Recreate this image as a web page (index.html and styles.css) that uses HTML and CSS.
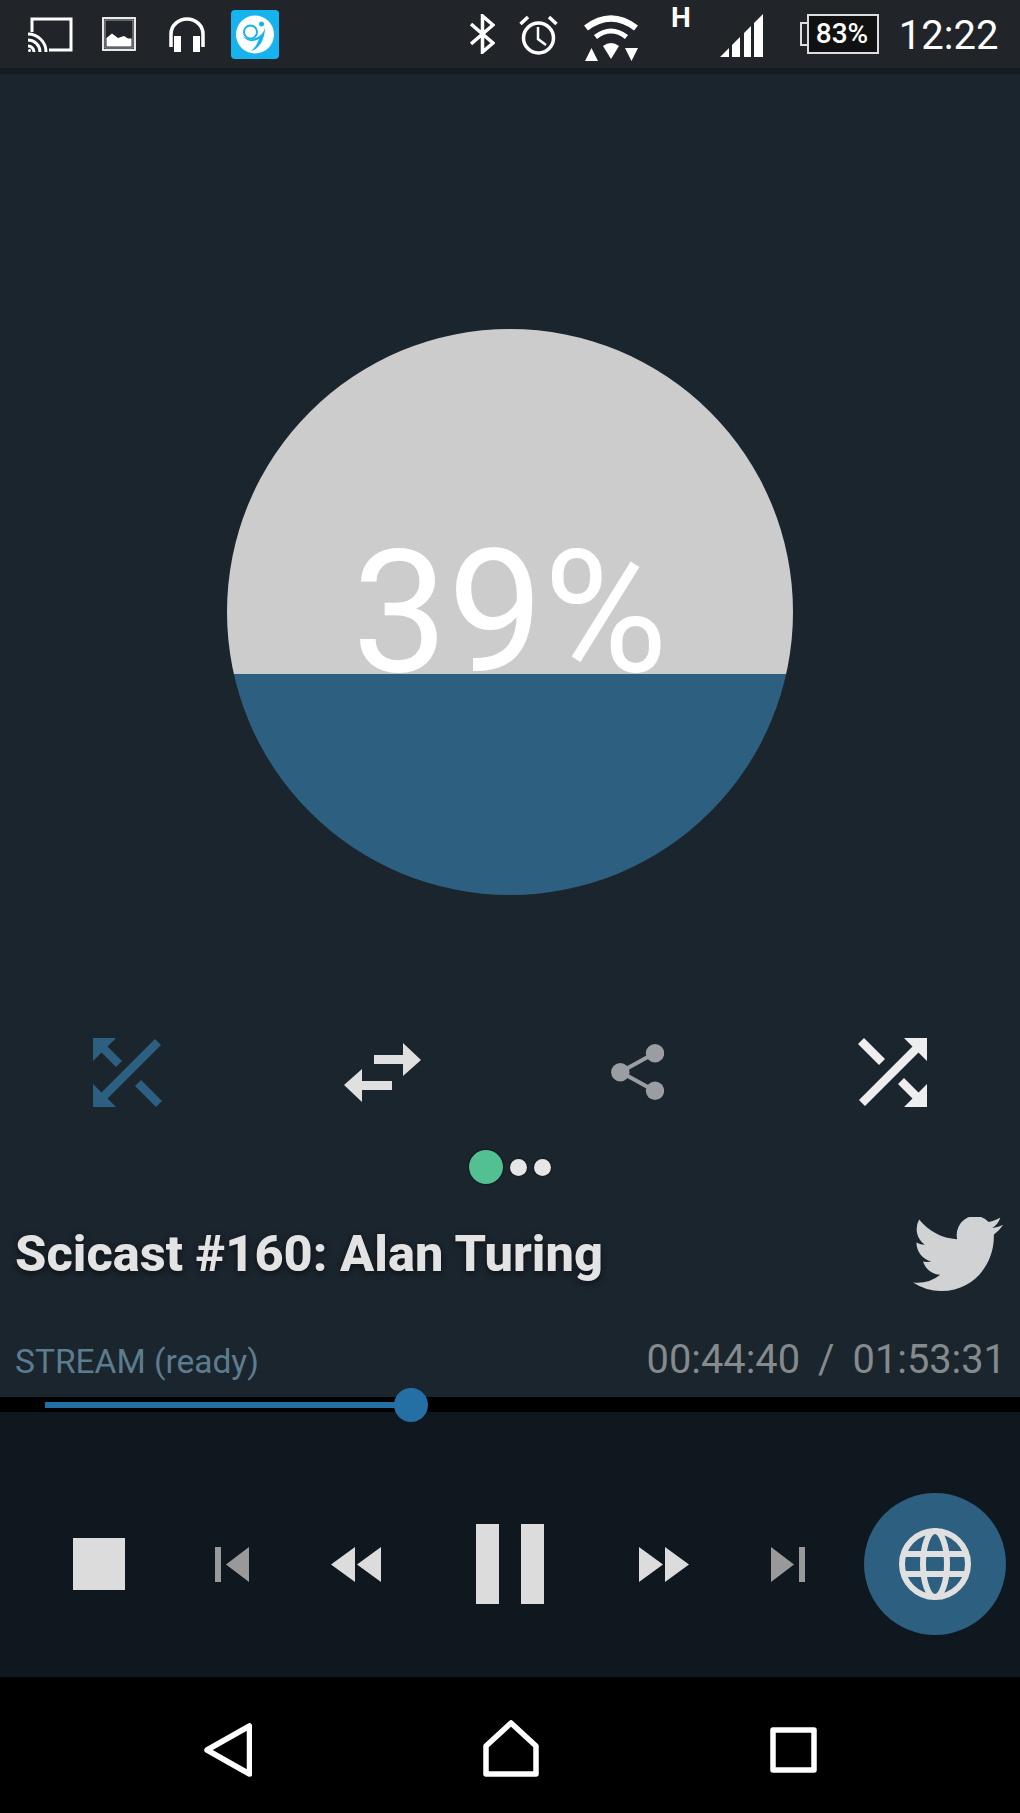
FILE: index.html
```html
<!DOCTYPE html>
<html lang="en">
<head>
  <meta charset="UTF-8" />
  <title>Scicast player</title>
  <link rel="stylesheet" href="styles.css">
</head>
<body>
  <svg class="defs" width="0" height="0">
    <symbol id="shuffle" viewBox="0 0 69 69">
      <path d="M46 0H69V23L60.500 14.500 7 68 1 62 54.500 8.500Z" />
      <path d="M0 6 6 0 27 21 21 27Z" />
      <path d="M40 46 46 40 60.500 54.500 69 46V69H46L54.500 60.500Z" />
    </symbol>
  </svg>

  <header class="status">
    <svg class="si-cast" width="45" height="35" viewBox="0 0 45 35">
      <path class="line" d="M4 15V2H43V33H21" stroke-width="3" />
      <path class="line" d="M0 17A18 18 0 0 1 18 35M0 23A12 12 0 0 1 12 35M0 29A6 6 0 0 1 6 35" stroke-width="3" />
      <circle class="solid" cx="1.500" cy="33.500" r="1.500" />
    </svg>
    <svg class="si-img" width="34" height="34" viewBox="0 0 34 34">
      <rect class="line" x="1" y="1" width="32" height="32" stroke-width="1.800" />
      <rect class="line" x="3" y="3" width="28" height="28" stroke-width=".6" />
      <path class="solid" d="M4.500 29.500V21L10 16.500 16 21 22 19 26 21.500 29.500 21.500V29.500Z" />
    </svg>
    <svg class="si-phones" width="36" height="35" viewBox="0 0 36 35">
      <path class="line" d="M2 30V17A16 15 0 0 1 34 17V30" stroke-width="3.500" />
      <rect class="solid" x="5" y="19" width="7" height="16" />
      <rect class="solid" x="24" y="19" width="7" height="16" />
    </svg>
    <svg class="si-app" width="48" height="49" viewBox="0 0 48 49">
      <rect x="0" y="0" width="48" height="49" rx="4" fill="#17b3ee" />
      <circle cx="24" cy="24.500" r="19" fill="#fff" />
      <circle cx="19.500" cy="22" r="6.500" fill="#fff" stroke="#17b3ee" stroke-width="2" />
      <circle cx="30.500" cy="14" r="2.500" fill="#17b3ee" />
      <path d="M11 24C14 31 21 33 28 29 26 34 24 38 20 41 28 39 34 30 34 17 33 24 28 27 22 29 17 30 13 28 11 24Z" fill="#17b3ee" />
    </svg>
    <svg class="si-bt" width="25" height="40" viewBox="0 0 25 40">
      <path class="line" d="M1 10 23 29 12.500 38V2L23 11 1 30" stroke-width="3.500" />
    </svg>
    <svg class="si-alarm" width="39" height="41" viewBox="0 0 39 41">
      <circle class="line" cx="19.500" cy="24" r="15" stroke-width="3.500" />
      <path class="line" d="M19 13V25L27 31" stroke-width="2.500" />
      <path class="line" d="M1.500 10 9 3M37.500 10 30 3" stroke-width="3.500" />
    </svg>
    <svg class="si-wifi" width="56" height="46" viewBox="0 0 56 46">
      <path class="line" d="M3 13Q28 -6 53 13" stroke-width="6.500" />
      <path class="line" d="M12.500 22Q28 10 43.500 22" stroke-width="5" />
      <path class="solid" d="M20 31Q28 25 36 31L28 44Z" />
      <path class="solid" d="M2 46H15L8.500 33ZM42 33H55L48.500 46Z" />
    </svg>
    <span class="si-h">H</span>
    <svg class="si-signal" width="43" height="43" viewBox="0 0 43 43">
      <path class="solid" d="M0 43 9 34V43ZM12 31 20 23V43H12ZM24 19 31 12V43H24ZM34 9 43 0V43H34Z" />
    </svg>
    <div class="battery">
      <span class="battery-nub"></span>
      <span class="battery-body">83%</span>
    </div>
    <span class="clock">12:22</span>
  </header>

  <main>
    <div class="gauge">
      <span class="gauge-text">39%</span>
    </div>

    <div class="actions">
      <svg class="icon-blue flip" width="69" height="69"><use href="#shuffle" /></svg>
      <svg class="icon-light" width="77" height="59" viewBox="0 0 77 59">
        <path d="M30 12H59V0L77 17 59 33V21H30ZM48 38H18V26L0 42 18 59V47H48Z" />
      </svg>
      <svg class="icon-share" width="53" height="56" viewBox="0 0 53 56">
        <path d="M44 9 9.500 28 44 47" fill="none" stroke="#9a9ea3" stroke-width="4" />
        <circle cx="44" cy="9.300" r="9.200" />
        <circle cx="9.300" cy="28.300" r="9.200" />
        <circle cx="44" cy="46.800" r="9.200" />
      </svg>
      <svg class="icon-bright" width="69" height="69"><use href="#shuffle" /></svg>
    </div>

    <div class="pager">
      <span class="dot dot-on"></span>
      <span class="dot"></span>
      <span class="dot"></span>
    </div>

    <div class="title-row">
      <h1>Scicast #160: Alan Turing</h1>
      <svg class="twitter" width="90" height="75" viewBox="0 2.500 24 19.500" preserveAspectRatio="none">
        <path d="M23.953 4.570a10 10 0 0 1-2.825.775 4.958 4.958 0 0 0 2.163-2.723c-.951.555-2.005.959-3.127 1.184a4.920 4.920 0 0 0-8.384 4.482C7.690 8.095 4.067 6.130 1.640 3.162a4.822 4.822 0 0 0-.666 2.475c0 1.710.870 3.213 2.188 4.096a4.904 4.904 0 0 1-2.228-.616v.060a4.923 4.923 0 0 0 3.946 4.827 4.996 4.996 0 0 1-2.212.085 4.936 4.936 0 0 0 4.604 3.417 9.867 9.867 0 0 1-6.102 2.105c-.390 0-.779-.023-1.170-.067a13.995 13.995 0 0 0 7.557 2.209c9.053 0 13.998-7.496 13.998-13.985 0-.210 0-.420-.015-.630A9.935 9.935 0 0 0 24 4.590z" />
      </svg>
    </div>

    <div class="meta-row">
      <span class="stream">STREAM (ready)</span>
      <span class="times">00:44:40<span class="sep">/</span>01:53:31</span>
    </div>

    <div class="slider">
      <div class="slider-fill" style="width: 366px">
        <span class="slider-thumb"></span>
      </div>
    </div>

    <div class="controls">
      <svg class="c-stop" width="52" height="52"><rect width="52" height="52" /></svg>
      <svg class="c-prev dim" width="34" height="35" viewBox="0 0 34 35"><path d="M0 0H6V35H0ZM34 0V35L11 17.500Z" /></svg>
      <svg class="c-rew" width="50" height="35" viewBox="0 0 50 35"><path d="M24 0V35L0 17.500ZM50 0V35L26 17.500Z" /></svg>
      <svg class="c-pause" width="68" height="80" viewBox="0 0 68 80"><path d="M0 0H23V80H0ZM45 0H68V80H45Z" /></svg>
      <svg class="c-ff" width="50" height="35" viewBox="0 0 50 35"><path d="M0 0V35L24 17.500ZM26 0V35L50 17.500Z" /></svg>
      <svg class="c-next dim" width="34" height="35" viewBox="0 0 34 35"><path d="M0 0V35L23 17.500ZM28 0H34V35H28Z" /></svg>
      <div class="fab">
        <svg width="72" height="72" viewBox="0 0 72 72" fill="none" stroke="#e0e0e0" stroke-width="6">
          <circle cx="36" cy="36" r="33" />
          <ellipse cx="36" cy="36" rx="12" ry="33" />
          <path d="M4 26H68M4 46H68" />
        </svg>
      </div>
    </div>
  </main>

  <nav class="navbar">
    <svg width="48" height="54" viewBox="0 0 48 54"><path d="M3 27 45.500 3V51Z" /></svg>
    <svg class="nav-home" width="56" height="57" viewBox="0 0 56 57"><path d="M28 3 53 26V54H3V26Z" /></svg>
    <svg width="47" height="46" viewBox="0 0 47 46"><rect x="3" y="3" width="41" height="40" /></svg>
  </nav>
</body>
</html>
```

FILE: styles.css
```css
:root {
  --bg: #1b252e;
  --panel: #0f181f;
  --blue: #2d5f80;
  --light: #e0e0e0;
}

html, body {
  margin: 0;
  padding: 0;
}

body {
  width: 1020px;
  height: 1813px;
  overflow: hidden;
  background-color: var(--bg);
  font-family: Roboto, sans-serif;
}

svg {
  display: block;
  flex: none;
}

.defs {
  position: absolute;
}

.line {
  fill: none;
  stroke: #fff;
}

.solid {
  fill: #fff;
}

/* status bar */
.status {
  display: flex;
  align-items: center;
  box-sizing: border-box;
  height: 74px;
  padding-left: 28px;
  background-color: #212429;
  border-bottom: 6px solid #141d24;
  color: #fff;
}

.si-img { margin-left: 29px; }
.si-phones { margin-left: 33px; }
.si-app { margin-left: 26px; }
.si-bt { margin-left: 191px; }
.si-alarm { margin-left: 24px; }
.si-wifi { margin-left: 25px; margin-top: 8px; }

.si-h {
  margin: 0 0 32px 32px;
  font-size: 28px;
  font-weight: 700;
  line-height: 1;
}

.si-signal { margin-left: 29px; margin-top: 3px; }

.battery {
  display: flex;
  align-items: center;
  margin-left: 37px;
}

.battery-nub {
  width: 5px;
  height: 20px;
  border: 2px solid #ddd;
  border-right: none;
}

.battery-body {
  box-sizing: border-box;
  width: 72px;
  height: 40px;
  padding-left: 7px;
  border: 2px solid #ddd;
  background-color: #111;
  font-size: 28px;
  font-weight: 500;
  line-height: 36px;
}

.clock {
  margin: 3px 0 0 20px;
  font-size: 40px;
  line-height: 1;
}

/* level gauge */
.gauge {
  box-sizing: border-box;
  display: flex;
  justify-content: center;
  width: 566px;
  height: 566px;
  margin: 255px auto 0;
  padding-top: 199px;
  border-radius: 50%;
  background: linear-gradient(to top, var(--blue) 39%, #ccc 39%);
}

.gauge-text {
  color: #fff;
  font-size: 170px;
  font-weight: 400;
  line-height: 1;
}

/* action icons */
.actions {
  display: grid;
  grid-template-columns: repeat(4, 1fr);
  justify-items: center;
  align-items: center;
  height: 70px;
  margin-top: 142px;
}

.icon-blue { fill: var(--blue); }
.icon-light { fill: var(--light); }
.icon-bright { fill: #eeeeee; }
.icon-share { fill: #9a9ea3; }
.flip { transform: rotate(180deg); }

.pager {
  display: flex;
  justify-content: center;
  align-items: center;
  gap: 7px;
  height: 34px;
  margin-top: 43px;
}

.dot {
  width: 17px;
  height: 17px;
  border-radius: 50%;
  background-color: #e6e6e6;
  box-shadow: 0 0 2px #000;
}

.dot-on {
  width: 34px;
  height: 34px;
  background-color: #52c090;
}

/* title and timing */
.title-row {
  display: flex;
  justify-content: space-between;
  align-items: center;
  margin-top: 33px;
  padding: 0 17px 0 15px;
}

h1 {
  margin: 0;
  color: #e3e3e3;
  font-size: 50.600px;
  font-weight: 800;
  line-height: 1.2;
  text-shadow: 0 2px 7px rgba(0, 0, 0, 0.6);
}

.twitter { fill: #d0d2d4; }

.meta-row {
  display: flex;
  justify-content: space-between;
  align-items: baseline;
  height: 40px;
  margin-top: 48px;
  padding: 0 14px 0 15px;
  line-height: 40px;
}

.stream {
  color: #5d7c8f;
  font-size: 33.500px;
}

.times {
  color: #858a8d;
  font-size: 39.800px;
}

.sep {
  margin: 0 18px;
}

.slider {
  display: flex;
  align-items: center;
  height: 15px;
  margin-top: 17px;
  padding-left: 45px;
  background-color: #000;
}

.slider-fill {
  position: relative;
  height: 6px;
  background-color: #2470a4;
}

.slider-thumb {
  position: absolute;
  top: -14px;
  right: -17px;
  width: 34px;
  height: 34px;
  border-radius: 50%;
  background-color: #2470a4;
}

/* transport controls */
.controls {
  box-sizing: border-box;
  display: flex;
  align-items: center;
  height: 265px;
  padding: 39px 0 0 73px;
  background-color: var(--panel);
}

.controls svg { fill: #dcdcdc; }
.controls .dim { fill: #999; }

.c-prev { margin-left: 90px; }
.c-rew { margin-left: 82px; }
.c-pause { margin-left: 95px; }
.c-ff { margin-left: 95px; }
.c-next { margin-left: 82px; }

.fab {
  display: flex;
  justify-content: center;
  align-items: center;
  width: 142px;
  height: 142px;
  margin-left: 59px;
  border-radius: 50%;
  background-color: var(--blue);
}

.controls .fab svg { fill: none; }

/* android nav bar */
.navbar {
  box-sizing: border-box;
  display: flex;
  justify-content: center;
  align-items: center;
  gap: 231px;
  height: 136px;
  padding-top: 10px;
  background-color: #000;
}

.nav-home {
  margin-bottom: 3px;
}

.navbar svg {
  fill: none;
  stroke: #fff;
  stroke-width: 5.500;
  stroke-linejoin: round;
}
```
